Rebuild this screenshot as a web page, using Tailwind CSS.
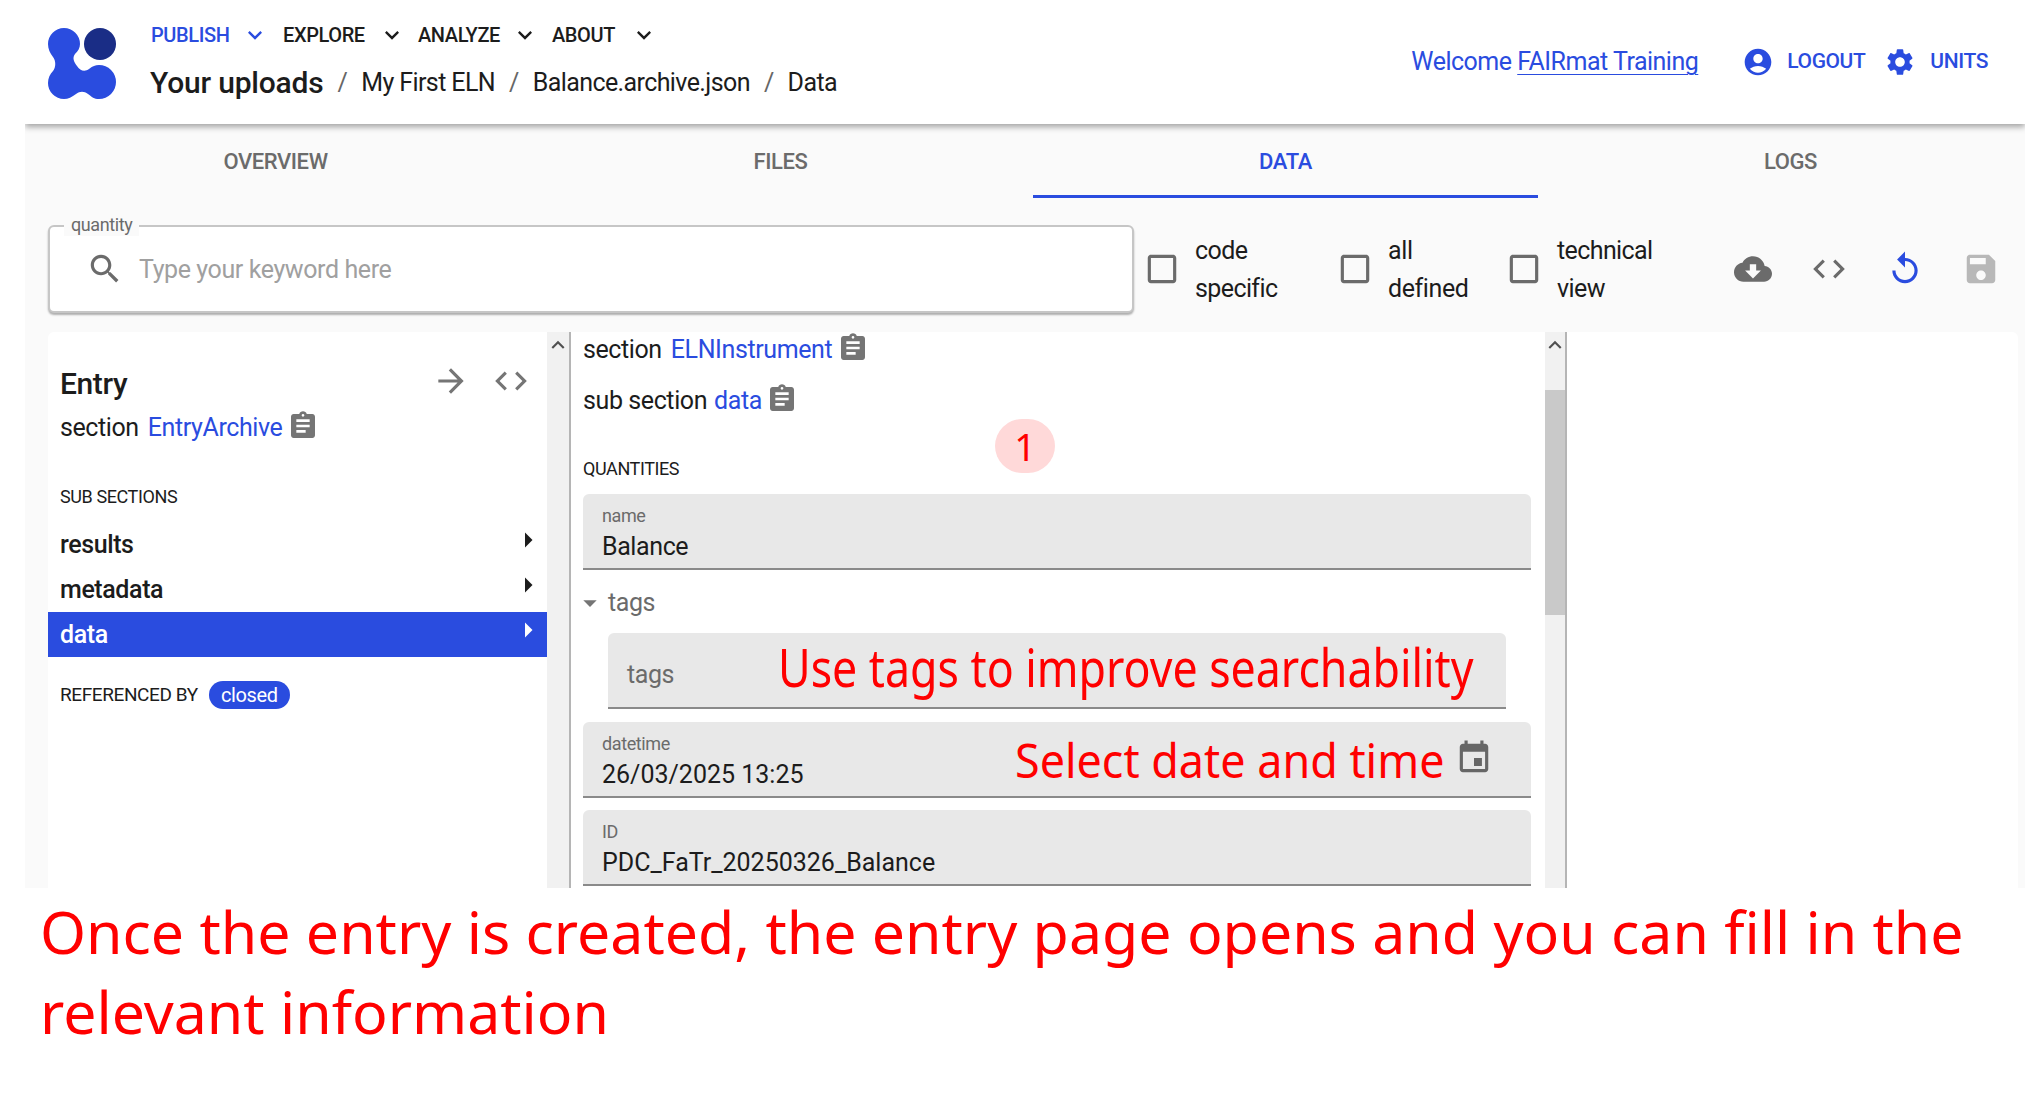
<!DOCTYPE html>
<html lang="en">
<head>
<meta charset="UTF-8" />
<title>Your uploads - Data</title>
<script src="https://cdn.jsdelivr.net/npm/@tailwindcss/browser@4"></script>
</head>
<body class="bg-white font-['Roboto',sans-serif] tracking-[-0.4px] text-[#1c1c1c] w-[2025px] h-[1096px] overflow-hidden">
  <div class="ml-[25px] w-[2000px] overflow-hidden">
    <!-- Header -->
    <header class="relative z-10 h-[124px] bg-white shadow-[0_3px_6px_rgba(0,0,0,0.35)] flex items-center justify-between pl-[23px] pr-[37px]">
      <div class="flex items-center">
        <svg class="w-[70px] h-[72px] mt-[4px]" viewBox="0 0 70 72">
          <path fill="#2a4cdf" d="M16 0A16 16 0 0 1 32 16C32 20 30 23 27 26C24 30 26 34 29 38C32 43 37 44 41 41C45 38 47 37 51 37A17 17 0 0 1 51 71C46 71 44 69 40 66C36 63 32 63 28 66C24 69 20 71 16 71A16 16 0 0 1 0 55C0 50 2 46 5 43C8 39 8 33 5 29C2 25 0 21 0 16A16 16 0 0 1 16 0Z"/>
          <circle cx="52" cy="16" r="16" fill="#1a2d86"/>
        </svg>
        <div class="ml-[33px]">
          <nav class="flex items-center h-[34px] -mt-[4px] text-[20px] font-medium leading-none">
            <span class="text-[#2a4cdf] w-[77px]">PUBLISH</span>
            <svg class="w-[28px] h-[28px] ml-[13px] fill-[#2a4cdf]" viewBox="0 0 24 24"><path d="M16.590 8.590 12 13.170 7.410 8.590 6 10l6 6 6-6z"/></svg>
            <span class="ml-[14px] w-[82px]">EXPLORE</span>
            <svg class="w-[28px] h-[28px] ml-[13px] fill-[#1c1c1c]" viewBox="0 0 24 24"><path d="M16.590 8.590 12 13.170 7.410 8.590 6 10l6 6 6-6z"/></svg>
            <span class="ml-[12px] w-[80px]">ANALYZE</span>
            <svg class="w-[28px] h-[28px] ml-[13px] fill-[#1c1c1c]" viewBox="0 0 24 24"><path d="M16.590 8.590 12 13.170 7.410 8.590 6 10l6 6 6-6z"/></svg>
            <span class="ml-[13px] w-[63px]">ABOUT</span>
            <svg class="w-[28px] h-[28px] ml-[15px] fill-[#1c1c1c]" viewBox="0 0 24 24"><path d="M16.590 8.590 12 13.170 7.410 8.590 6 10l6 6 6-6z"/></svg>
          </nav>
          <div class="flex items-center h-[40px] mt-[11px] text-[25px] tracking-[-0.6px] leading-none">
            <span class="-ml-[1px] text-[30px] tracking-[-0.2px] font-medium">Your uploads</span>
            <span class="mx-[14px] text-[#666]">/</span>
            <span>My First ELN</span>
            <span class="mx-[14px] text-[#666]">/</span>
            <span>Balance.archive.json</span>
            <span class="mx-[14px] text-[#666]">/</span>
            <span>Data</span>
          </div>
        </div>
      </div>
      <div class="flex items-center text-[#2a4cdf]">
        <span class="text-[25px] tracking-[-0.5px]">Welcome <span class="underline underline-offset-4 decoration-1">FAIRmat Training</span></span>
        <svg class="w-[32px] h-[32px] ml-[44px] fill-[#2a4cdf]" viewBox="0 0 24 24"><path d="M12 2C6.480 2 2 6.480 2 12s4.480 10 10 10 10-4.480 10-10S17.520 2 12 2zm0 4c1.930 0 3.500 1.570 3.500 3.500S13.930 13 12 13s-3.500-1.570-3.500-3.500S10.070 6 12 6zm0 14c-2.030 0-4.430-.82-6.140-2.880C7.550 15.800 9.680 15 12 15s4.450.8 6.140 2.120C16.430 19.180 14.030 20 12 20z"/></svg>
        <span class="ml-[13px] text-[21px] font-medium">LOGOUT</span>
        <svg class="w-[32px] h-[32px] ml-[19px] fill-[#2a4cdf]" viewBox="0 0 24 24"><path d="M19.140 12.940c.04-.3.06-.61.06-.94 0-.32-.02-.64-.07-.94l2.030-1.580c.18-.14.23-.41.12-.61l-1.920-3.320c-.12-.22-.37-.29-.59-.22l-2.390.96c-.5-.38-1.030-.7-1.620-.94l-.36-2.540c-.04-.24-.24-.41-.48-.41h-3.840c-.24 0-.43.17-.47.41l-.36 2.540c-.59.24-1.130.57-1.620.94l-2.390-.96c-.22-.08-.47 0-.59.22L2.740 8.870c-.12.21-.08.47.12.61l2.030 1.580c-.05.3-.09.63-.09.94s.02.64.07.94l-2.030 1.580c-.18.14-.23.41-.12.61l1.920 3.320c.12.22.37.29.59.22l2.390-.96c.5.38 1.030.7 1.620.94l.36 2.540c.05.24.24.41.48.41h3.840c.24 0 .44-.17.47-.41l.36-2.540c.59-.24 1.130-.56 1.620-.94l2.390.96c.22.08.47 0 .59-.22l1.920-3.320c.12-.22.07-.47-.12-.61l-2.010-1.580zM12 15.600c-1.980 0-3.600-1.620-3.600-3.600s1.620-3.600 3.600-3.600 3.600 1.620 3.600 3.600-1.620 3.600-3.600 3.600z"/></svg>
        <span class="ml-[14px] text-[21px] font-medium">UNITS</span>
      </div>
    </header>

    <main class="h-[764px] bg-[#fafafa] overflow-hidden">
      <!-- Tabs -->
      <div class="grid grid-cols-4 w-[2020px] -ml-[2px] h-[74px] text-[22px] font-medium text-[#6b6b6b]">
        <div class="flex items-center justify-center">OVERVIEW</div>
        <div class="flex items-center justify-center">FILES</div>
        <div class="flex items-center justify-center pt-[3px] text-[#2a4cdf] border-b-[3px] border-[#2a4cdf]">DATA</div>
        <div class="flex items-center justify-center">LOGS</div>
      </div>

      <!-- Toolbar -->
      <div class="flex items-center mt-[27px] pl-[23px] h-[88px]">
        <div class="relative w-[1086px] h-[88px] bg-white border-2 border-[#c6c6c6] rounded-[6px] shadow-[0_2px_2px_rgba(0,0,0,0.3)] flex items-center pl-[36px]">
          <span class="absolute left-[14px] top-[-13px] px-[7px] bg-[#fafafa] text-[18px] leading-[22px] text-[#6b6b6b]">quantity</span>
          <svg class="w-[38px] h-[38px] fill-[#6b6b6b]" viewBox="0 0 24 24"><path d="M15.500 14h-.79l-.28-.27C15.410 12.590 16 11.110 16 9.500 16 5.910 13.090 3 9.500 3S3 5.910 3 9.500 5.910 16 9.500 16c1.610 0 3.090-.59 4.230-1.570l.27.28v.79l5 4.990L20.490 19l-4.990-5zm-6 0C7.010 14 5 11.990 5 9.500S7.010 5 9.500 5 14 7.010 14 9.500 11.990 14 9.500 14z"/></svg>
          <span class="ml-[15px] mt-[2px] text-[25px] text-[#a0a0a0]">Type your keyword here</span>
        </div>
        <svg class="w-[38px] h-[38px] ml-[9px] fill-[#6b6b6b]" viewBox="0 0 24 24"><path d="M19 5v14H5V5h14m0-2H5c-1.100 0-2 .9-2 2v14c0 1.100.9 2 2 2h14c1.100 0 2-.9 2-2V5c0-1.100-.9-2-2-2z"/></svg>
        <span class="ml-[14px] mt-[2px] w-[141px] text-[25px] tracking-[-0.6px] leading-[38px]">code<br />specific</span>
        <svg class="w-[38px] h-[38px] fill-[#6b6b6b]" viewBox="0 0 24 24"><path d="M19 5v14H5V5h14m0-2H5c-1.100 0-2 .9-2 2v14c0 1.100.9 2 2 2h14c1.100 0 2-.9 2-2V5c0-1.100-.9-2-2-2z"/></svg>
        <span class="ml-[14px] mt-[2px] w-[117px] text-[25px] leading-[38px]">all<br />defined</span>
        <svg class="w-[38px] h-[38px] fill-[#6b6b6b]" viewBox="0 0 24 24"><path d="M19 5v14H5V5h14m0-2H5c-1.100 0-2 .9-2 2v14c0 1.100.9 2 2 2h14c1.100 0 2-.9 2-2V5c0-1.100-.9-2-2-2z"/></svg>
        <span class="ml-[14px] mt-[2px] w-[177px] text-[25px] tracking-[-0.6px] leading-[38px]">technical<br />view</span>
        <svg class="w-[38px] h-[38px] fill-[#6b6b6b]" viewBox="0 0 24 24"><path d="M19.350 10.040C18.670 6.590 15.640 4 12 4 9.110 4 6.600 5.640 5.350 8.040 2.340 8.360 0 10.910 0 14c0 3.310 2.690 6 6 6h13c2.760 0 5-2.240 5-5 0-2.640-2.050-4.780-4.650-4.960zM17 13l-5 5-5-5h3V9h4v4h3z"/></svg>
        <svg class="w-[38px] h-[38px] ml-[38px] fill-[#6b6b6b]" viewBox="0 0 24 24"><path d="M9.400 16.600 4.800 12l4.600-4.600L8 6l-6 6 6 6 1.400-1.400zm5.200 0 4.600-4.600-4.600-4.600L16 6l6 6-6 6-1.400-1.400z"/></svg>
        <svg class="w-[38px] h-[38px] ml-[38px] fill-[#2a4cdf]" viewBox="0 0 24 24"><path d="M12 5V1L7 6l5 5V7c3.310 0 6 2.690 6 6s-2.690 6-6 6-6-2.690-6-6H4c0 4.420 3.580 8 8 8s8-3.580 8-8-3.580-8-8-8z"/></svg>
        <svg class="w-[38px] h-[38px] ml-[38px] fill-[#b8b8b8]" viewBox="0 0 24 24"><path d="M17 3H5c-1.110 0-2 .9-2 2v14c0 1.100.89 2 2 2h14c1.100 0 2-.9 2-2V7l-4-4zm-5 16c-1.660 0-3-1.340-3-3s1.340-3 3-3 3 1.340 3 3-1.340 3-3 3zm3-10H5V5h10v4z"/></svg>
      </div>

      <!-- Panels -->
      <div class="flex mt-[19px] ml-[23px] mr-[7px] h-[600px]">
        <!-- Entry column -->
        <section class="w-[499px] bg-white rounded-tl-[6px]">
          <div class="flex items-center justify-between h-[36px] mt-[34px] pl-[12px] pr-[17px]">
            <h2 class="text-[30px] font-medium leading-none">Entry</h2>
            <div class="flex items-center gap-[22px] -mt-[6px]">
              <svg class="w-[38px] h-[38px] fill-[#757575]" viewBox="0 0 24 24"><path d="M12 4l-1.410 1.410L16.170 11H4v2h12.170l-5.580 5.590L12 20l8-8z"/></svg>
              <svg class="w-[38px] h-[38px] fill-[#757575]" viewBox="0 0 24 24"><path d="M9.400 16.600 4.800 12l4.600-4.600L8 6l-6 6 6 6 1.400-1.400zm5.200 0 4.600-4.600-4.600-4.600L16 6l6 6-6 6-1.400-1.400z"/></svg>
            </div>
          </div>
          <div class="flex items-center h-[36px] mt-[8px] pl-[12px] text-[25px]">
            <span>section</span>
            <span class="ml-[9px] text-[#2a4cdf]">EntryArchive</span>
            <svg class="w-[32px] h-[32px] ml-[5px] -mt-[4px] fill-[#757575]" viewBox="0 0 24 24"><path d="M19 3h-4.180C14.400 1.840 13.300 1 12 1c-1.300 0-2.400.84-2.820 2H5c-1.100 0-2 .9-2 2v14c0 1.100.9 2 2 2h14c1.100 0 2-.9 2-2V5c0-1.100-.9-2-2-2zm-7 0c.55 0 1 .45 1 1s-.45 1-1 1-1-.45-1-1 .45-1 1-1zm2 14H7v-2h7v2zm3-4H7v-2h10v2zm0-4H7V7h10v2z"/></svg>
          </div>
          <h3 class="mt-[39px] pl-[12px] text-[18px] leading-[24px]">SUB SECTIONS</h3>
          <ul class="mt-[13px] text-[25px] font-medium">
            <li class="flex items-center justify-between h-[45px] pl-[12px] pr-[1px]">results
              <svg class="w-[36px] h-[36px] -mt-[10px] fill-[#1c1c1c]" viewBox="0 0 24 24"><path d="M10 17l5-5-5-5v10z"/></svg>
            </li>
            <li class="flex items-center justify-between h-[45px] pl-[12px] pr-[1px]">metadata
              <svg class="w-[36px] h-[36px] -mt-[10px] fill-[#1c1c1c]" viewBox="0 0 24 24"><path d="M10 17l5-5-5-5v10z"/></svg>
            </li>
            <li class="flex items-center justify-between h-[45px] pl-[12px] pr-[1px] bg-[#2a4cdf] text-white">data
              <svg class="w-[36px] h-[36px] -mt-[10px] fill-white" viewBox="0 0 24 24"><path d="M10 17l5-5-5-5v10z"/></svg>
            </li>
          </ul>
          <div class="flex items-center h-[28px] mt-[24px] pl-[12px] text-[19px]">
            <span>REFERENCED BY</span>
            <span class="ml-[11px] flex items-center justify-center w-[81px] h-[28px] rounded-full bg-[#2a4cdf] text-white text-[20px]">closed</span>
          </div>
        </section>
        <div class="w-[24px] bg-[#f1f1f1] border-r-2 border-[#b5b5b5] flex justify-center">
          <svg class="w-[26px] h-[26px] shrink-0 fill-[#505050]" viewBox="0 0 24 24"><path d="M7.410 15.410 12 10.830l4.590 4.580L18 14l-6-6-6 6z"/></svg>
        </div>

        <!-- Data column -->
        <section class="relative w-[974px] bg-white pl-[12px] pr-[14px]">
          <div class="flex items-center h-[36px] text-[25px]">
            <span>section</span>
            <span class="ml-[9px] text-[#2a4cdf]">ELNInstrument</span>
            <svg class="w-[32px] h-[32px] ml-[5px] -mt-[4px] fill-[#757575]" viewBox="0 0 24 24"><path d="M19 3h-4.180C14.400 1.840 13.300 1 12 1c-1.300 0-2.400.84-2.820 2H5c-1.100 0-2 .9-2 2v14c0 1.100.9 2 2 2h14c1.100 0 2-.9 2-2V5c0-1.100-.9-2-2-2zm-7 0c.55 0 1 .45 1 1s-.45 1-1 1-1-.45-1-1 .45-1 1-1zm2 14H7v-2h7v2zm3-4H7v-2h10v2zm0-4H7V7h10v2z"/></svg>
          </div>
          <div class="flex items-center h-[36px] mt-[15px] text-[25px]">
            <span>sub section</span>
            <span class="ml-[7px] text-[#2a4cdf]">data</span>
            <svg class="w-[32px] h-[32px] ml-[4px] -mt-[4px] fill-[#757575]" viewBox="0 0 24 24"><path d="M19 3h-4.180C14.400 1.840 13.300 1 12 1c-1.300 0-2.400.84-2.820 2H5c-1.100 0-2 .9-2 2v14c0 1.100.9 2 2 2h14c1.100 0 2-.9 2-2V5c0-1.100-.9-2-2-2zm-7 0c.55 0 1 .45 1 1s-.45 1-1 1-1-.45-1-1 .45-1 1-1zm2 14H7v-2h7v2zm3-4H7v-2h10v2zm0-4H7V7h10v2z"/></svg>
          </div>
          <div class="absolute left-[424px] top-[87px] w-[60px] h-[54px] rounded-full bg-[#ffd9d9] flex items-center justify-center text-[#ff0000] text-[38px] tracking-normal font-['Noto_Sans',sans-serif]">1</div>
          <h3 class="mt-[38px] text-[18px] leading-[24px]">QUANTITIES</h3>

          <div class="mt-[13px] h-[76px] pt-[11px] px-[19px] bg-[#e8e8e8] rounded-t-[6px] border-b-2 border-[#8a8a8a]">
            <div class="text-[18px] leading-[22px] text-[#6b6b6b]">name</div>
            <div class="mt-[5px] text-[25px] leading-[30px]">Balance</div>
          </div>

          <div class="flex items-center h-[30px] mt-[18px] text-[25px] text-[#6b6b6b]">
            <svg class="w-[32px] h-[32px] -ml-[9px] shrink-0 fill-[#757575]" viewBox="0 0 24 24"><path d="M7 10l5 5 5-5z"/></svg>
            <span class="ml-[2px]">tags</span>
          </div>

          <div class="relative ml-[25px] mr-[25px] mt-[15px] h-[76px] px-[19px] bg-[#e8e8e8] rounded-t-[6px] border-b-2 border-[#8a8a8a] flex items-center pt-[10px]">
            <span class="text-[25px] text-[#6b6b6b]">tags</span>
            <span class="absolute left-[170px] top-[-8px] origin-left scale-x-[0.859] whitespace-nowrap tracking-normal text-[52px] leading-[84px] text-[#ff0000] font-['Noto_Sans',sans-serif]">Use tags to improve searchability</span>
          </div>

          <div class="relative mt-[13px] h-[76px] pt-[11px] px-[19px] bg-[#e8e8e8] rounded-t-[6px] border-b-2 border-[#8a8a8a]">
            <div class="text-[18px] leading-[22px] text-[#6b6b6b]">datetime</div>
            <div class="mt-[5px] text-[25px] tracking-normal leading-[30px]">26/03/2025 13:25</div>
            <span class="absolute left-[432px] top-[0px] origin-left scale-x-[0.935] whitespace-nowrap tracking-normal text-[48px] leading-[76px] text-[#ff0000] font-['Noto_Sans',sans-serif]">Select date and time</span>
            <svg class="absolute left-[872px] top-[17px] w-[38px] h-[38px] fill-[#666]" viewBox="0 0 24 24"><path d="M17 12h-5v5h5v-5zM16 1v2H8V1H6v2H5c-1.110 0-1.990.9-1.990 2L3 19c0 1.100.89 2 2 2h14c1.100 0 2-.9 2-2V5c0-1.100-.9-2-2-2h-1V1h-2zm3 18H5V8h14v11z"/></svg>
          </div>

          <div class="mt-[12px] h-[76px] pt-[11px] px-[19px] bg-[#e8e8e8] rounded-t-[6px] border-b-2 border-[#8a8a8a]">
            <div class="text-[18px] leading-[22px] text-[#6b6b6b]">ID</div>
            <div class="mt-[5px] text-[25px] tracking-normal leading-[30px]">PDC_FaTr_20250326_Balance</div>
          </div>
        </section>
        <div class="relative w-[22px] bg-[#f1f1f1] border-r-2 border-[#b5b5b5] flex justify-center">
          <svg class="w-[26px] h-[26px] shrink-0 fill-[#505050]" viewBox="0 0 24 24"><path d="M7.410 15.410 12 10.830l4.590 4.580L18 14l-6-6-6 6z"/></svg>
          <div class="absolute left-0 top-[58px] w-[20px] h-[225px] bg-[#c9c9c9]"></div>
        </div>

        <!-- Empty column -->
        <section class="flex-1 bg-white rounded-tr-[6px]"></section>
      </div>
    </main>
  </div>

  <!-- Caption -->
  <p class="pl-[40px] pt-[3px] w-[2000px] text-[59px] tracking-normal leading-[80px] text-[#ff0000] font-['Noto_Sans',sans-serif]">Once the entry is created, the entry page opens and you can fill in the relevant information</p>
</body>
</html>
